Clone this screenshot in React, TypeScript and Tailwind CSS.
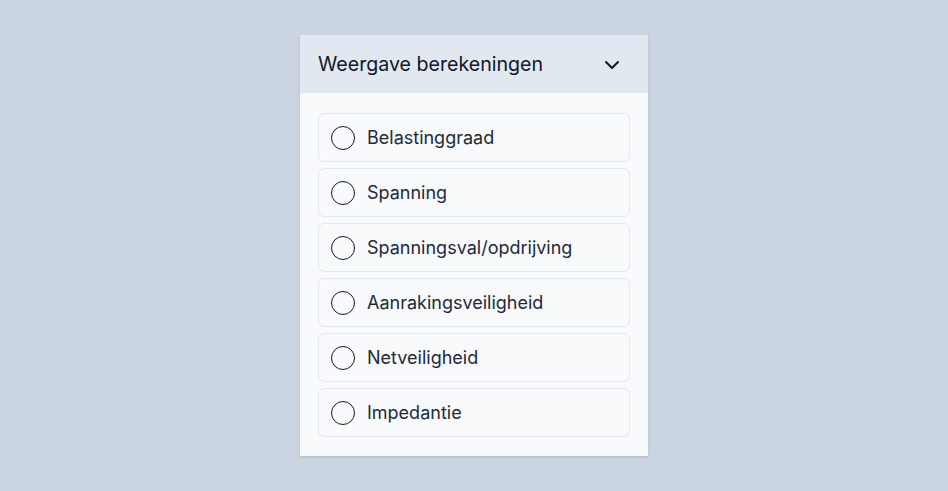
import { ChevronDown } from "lucide-react";

const options = [
  "Belastinggraad",
  "Spanning",
  "Spanningsval/opdrijving",
  "Aanrakingsveiligheid",
  "Netveiligheid",
  "Impedantie",
];

export default function App() {
  return (
    <div
      className="min-h-screen bg-[#cbd5e1] flex justify-center pt-[35px]"
      style={{ fontFamily: "Inter, 'Noto Sans', sans-serif" }}
    >
      <div className="w-[348px] h-fit bg-[#f8fafc] shadow-sm">
        <div className="h-[58px] bg-[#e2e8f0] flex items-center justify-between pl-[18px] pr-[24px] pt-[1px]">
          <span className="text-[19.6px] text-[#0f172a]">Weergave berekeningen</span>
          <ChevronDown className="w-[24px] h-[24px] text-[#0f172a]" strokeWidth={2} />
        </div>
        <div className="px-[18px] pt-[20px] pb-[19px] flex flex-col gap-[6px]">
          {options.map((o) => (
            <label
              key={o}
              className="h-[49px] flex items-center gap-[12px] px-[12px] border border-[#e2e8f0] rounded-md bg-[#f8fafc]"
            >
              <span className="w-[24px] h-[24px] rounded-full border border-[#0f172a] shrink-0" />
              <span className="text-[18px] text-[#1e293b]">{o}</span>
            </label>
          ))}
        </div>
      </div>
    </div>
  );
}
